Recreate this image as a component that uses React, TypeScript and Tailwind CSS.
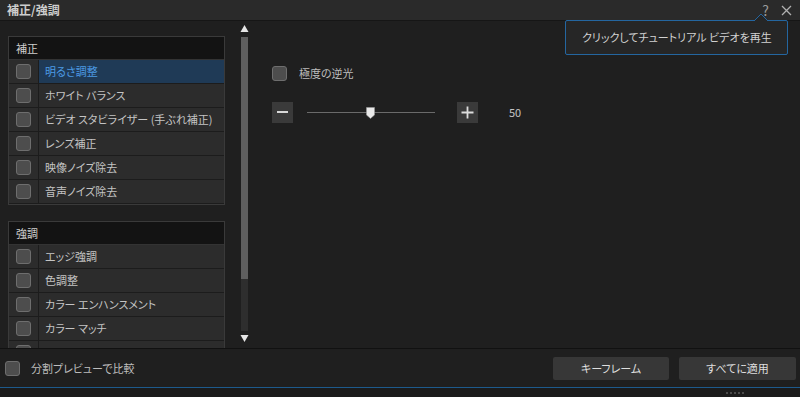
import React from "react";

const font = {
  fontFamily: '"Noto Sans CJK JP", "Noto Sans", sans-serif',
  fontFeatureSettings: '"palt"',
};

const correction = [
  "明るさ調整",
  "ホワイト バランス",
  "ビデオ スタビライザー (手ぶれ補正)",
  "レンズ補正",
  "映像ノイズ除去",
  "音声ノイズ除去",
];

// last row is only partly visible, clipped by the list
const enhance = ["エッジ強調", "色調整", "カラー エンハンスメント", "カラー マッチ", ""];

function Box({ className = "" }: { className?: string }) {
  return (
    <span
      className={`block h-[15px] w-[15px] shrink-0 rounded-[3px] border border-[#6e6e6e] bg-[#4d4d4d] ${className}`}
    />
  );
}

function Row({ label, active }: { label: string; active?: boolean }) {
  return (
    <div className="flex h-[24px] shrink-0 border-b border-[#1c1c1c]">
      <div className="flex w-[30px] items-center justify-center border-r border-[#1c1c1c] bg-[#2c2c2c]">
        <Box />
      </div>
      <div
        className={`flex flex-1 items-center whitespace-nowrap pl-[6px] text-[11px] ${
          active ? "bg-[#1f3a56] text-[#4c9be4]" : "bg-[#2c2c2c] text-[#c4c4c4]"
        }`}
      >
        {label}
      </div>
    </div>
  );
}

function Section({ title, items, first }: { title: string; items: string[]; first?: boolean }) {
  return (
    <div className="flex flex-col border border-[#3a3a3a]">
      <div className="flex h-[23px] shrink-0 items-center border-b border-[#333] bg-[#131313] pl-[7px] text-[11px] text-[#cfcfcf]">
        {title}
      </div>
      {items.map((it, i) => (
        <Row key={i} label={it} active={first && i === 0} />
      ))}
    </div>
  );
}

export default function App() {
  return (
    <div className="relative flex h-[397px] w-[800px] flex-col overflow-hidden bg-[#1f1f1f]" style={font}>
      {/* title bar */}
      <div className="flex h-[21px] shrink-0 items-center justify-between border-b border-[#161616] bg-[#2a2a2a] pl-[7px] pr-[8px]">
        <span className="text-[12px] font-bold text-[#cdcdcd]">補正/強調</span>
        <div className="flex items-center gap-[12px] text-[#9a9a9a]">
          <span className="text-[14px] leading-none">?</span>
          <svg width="11" height="11" viewBox="0 0 11 11">
            <path d="M1 1 L10 10 M10 1 L1 10" stroke="#b0b0b0" strokeWidth="1.3" />
          </svg>
        </div>
      </div>

      {/* content */}
      <div className="flex h-[327px] shrink-0">
        <div className="ml-[8px] flex h-full w-[217px] flex-col gap-[16px] overflow-hidden pt-[15px]">
          <Section title="補正" items={correction} first />
          <Section title="強調" items={enhance} />
        </div>

        {/* scrollbar */}
        <div className="ml-[15px] flex w-[9px] flex-col items-center pb-[5px] pt-[3px]">
          <svg width="9" height="9" viewBox="0 0 9 9">
            <path d="M4.5 1 L8.5 8 L0.5 8 Z" fill="#e6e6e6" />
          </svg>
          <div className="mt-[4px] flex w-[7px] flex-1 flex-col bg-[#2e2e2e]">
            <div className="h-[242px] bg-[#5f5f5f]" />
          </div>
          <svg width="9" height="9" viewBox="0 0 9 9" className="mt-[3px]">
            <path d="M0.5 1 L8.5 1 L4.5 8 Z" fill="#e6e6e6" />
          </svg>
        </div>

        {/* right panel */}
        <div className="ml-[23px] flex flex-col pt-[44px]">
          <div className="flex items-center gap-[12px]">
            <Box />
            <span className="text-[11px] text-[#bdbdbd]">極度の逆光</span>
          </div>
          <div className="mt-[20px] flex items-center">
            <div className="flex h-[21px] w-[21px] items-center justify-center bg-[#3a3a3a]">
              <span className="h-[2px] w-[11px] bg-[#d8d8d8]" />
            </div>
            <div className="relative ml-[14px] h-[1px] w-[128px] bg-[#6a6a6a]">
              <svg width="9" height="12" viewBox="0 0 9 12" className="absolute left-[59px] top-[-5px]">
                <path d="M0.5 0.5 H8.5 V8 L4.5 11.5 L0.5 8 Z" fill="#e8e8e8" stroke="#9a9a9a" strokeWidth="0.6" />
              </svg>
            </div>
            <div className="ml-[22px] flex h-[21px] w-[21px] items-center justify-center bg-[#3a3a3a]">
              <svg width="13" height="13" viewBox="0 0 13 13">
                <path d="M6.5 0.5 V12.5 M0.5 6.5 H12.5" stroke="#dcdcdc" strokeWidth="1.8" />
              </svg>
            </div>
            <span className="ml-[31px] text-[11px] text-[#c4c4c4]">50</span>
          </div>
        </div>
      </div>

      {/* bottom bar */}
      <div className="flex h-[39px] shrink-0 items-center border-t border-[#111] bg-[#1f1f1f] pl-[5px] pr-[4px]">
        <Box />
        <span className="ml-[11px] whitespace-nowrap text-[11px] text-[#bdbdbd]">分割プレビューで比較</span>
        <div className="ml-auto flex gap-[10px]">
          <button className="h-[23px] w-[116px] rounded-[2px] bg-[#373737] text-[11px] text-[#dedede]">
            キーフレーム
          </button>
          <button className="h-[23px] w-[117px] rounded-[2px] bg-[#373737] text-[11px] text-[#dedede]">
            すべてに適用
          </button>
        </div>
      </div>
      <div className="h-[1px] shrink-0 bg-[#1d5a8c]" />
      <div className="flex flex-1 items-start justify-end bg-[#1b1b1b] pr-[56px] pt-[4px]">
        <div className="flex gap-[2px]">
          {[0, 1, 2, 3, 4].map((i) => (
            <span key={i} className="h-[2px] w-[2px] bg-[#4a4a4a]" />
          ))}
        </div>
      </div>

      {/* tooltip */}
      <div className="absolute left-[565px] top-[20px] flex h-[35px] w-[223px] items-center whitespace-nowrap rounded-[2px] border border-[#2466a0] bg-[#262626] pl-[16px] text-[11px] text-[#d2d2d2]">
        クリックしてチュートリアル ビデオを再生
        <svg width="14" height="8" viewBox="0 0 14 8" className="absolute right-[19px] top-[-8px]">
          <path d="M0 8 L7 1 L14 8" fill="#262626" stroke="#2466a0" strokeWidth="1" />
        </svg>
      </div>
    </div>
  );
}
